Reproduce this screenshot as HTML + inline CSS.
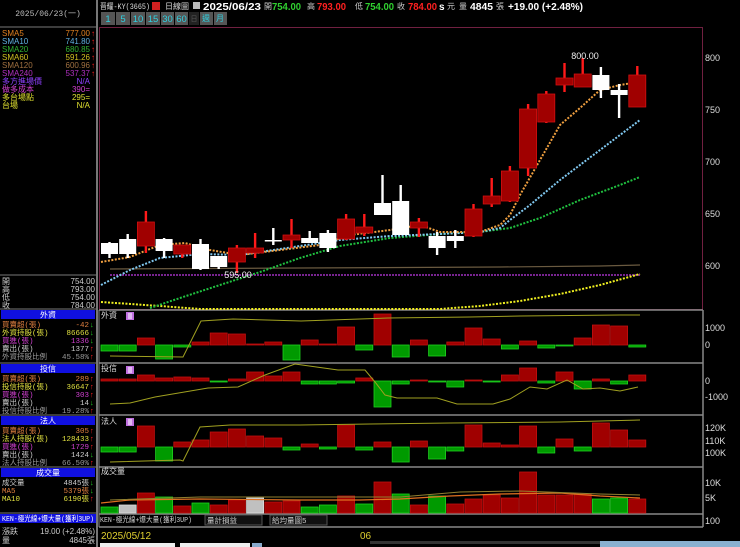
<!DOCTYPE html>
<html><head><meta charset="utf-8">
<style>
html,body{margin:0;padding:0;background:#000;width:740px;height:547px;overflow:hidden;}
svg{display:block}
text{font-family:"Liberation Sans","Noto Sans CJK TC",sans-serif;}
.m{font-family:"Liberation Mono","Noto Sans CJK TC",monospace;}
</style></head><body>
<svg id="s" width="740" height="547" viewBox="0 0 740 547" xmlns="http://www.w3.org/2000/svg">
<rect width="740" height="547" fill="#000"/>
<text x="48" y="16" fill="#bbb" font-size="8" text-anchor="middle" class="m">2025/06/23(一)</text>
<line x1="97" y1="0" x2="97" y2="547" stroke="#777" stroke-width="2"/>
<line x1="0" y1="27" x2="97" y2="27" stroke="#777"/>
<g class="m" font-size="8">
<text x="2" y="36" fill="#e08020">SMA5</text><text x="90" y="36" fill="#e08020" text-anchor="end">777.00</text>
<text x="2" y="44" fill="#60b0e0">SMA10</text><text x="90" y="44" fill="#60b0e0" text-anchor="end">741.80</text>
<text x="2" y="52" fill="#30b030">SMA20</text><text x="90" y="52" fill="#30b030" text-anchor="end">680.85</text>
<text x="2" y="60" fill="#d0c020">SMA60</text><text x="90" y="60" fill="#d0c020" text-anchor="end">591.26</text>
<text x="2" y="68" fill="#a07040">SMA120</text><text x="90" y="68" fill="#a07040" text-anchor="end">600.96</text>
<text x="2" y="76" fill="#b030c0">SMA240</text><text x="90" y="76" fill="#b030c0" text-anchor="end">537.37</text>
<text x="2" y="84" fill="#9040ff">多方進場價</text><text x="90" y="84" fill="#9040ff" text-anchor="end">N/A</text>
<text x="2" y="92" fill="#d040d0">做多成本</text><text x="90" y="92" fill="#d040d0" text-anchor="end">390=</text>
<text x="2" y="100" fill="#e0e030">多台場點</text><text x="90" y="100" fill="#e0e030" text-anchor="end">295=</text>
<text x="2" y="108" fill="#e0e030">台場</text><text x="90" y="108" fill="#e0e030" text-anchor="end">N/A</text>
</g>
<g fill="#ff2020" font-size="8"><text x="91" y="36">↑</text><text x="91" y="44">↑</text><text x="91" y="52">↑</text><text x="91" y="60">↑</text><text x="91" y="68">↑</text><text x="91" y="76">↑</text></g>
<line x1="0" y1="275" x2="97" y2="275" stroke="#777"/>
<g class="m" fill="#ccc" font-size="8">
<text x="2" y="284">開</text><text x="95" y="284" text-anchor="end">754.00</text>
<text x="2" y="292">高</text><text x="95" y="292" text-anchor="end">793.00</text>
<text x="2" y="300">低</text><text x="95" y="300" text-anchor="end">754.00</text>
<text x="2" y="308">收</text><text x="95" y="308" text-anchor="end">784.00</text>
</g>
<g id="leftpanels"></g>
<rect x="0" y="514" width="96" height="9" fill="#1010e0"/>
<text x="2" y="521" class="m" fill="#fff" font-size="7.5" textLength="92" lengthAdjust="spacingAndGlyphs">KEN-極光線+爆大量(獲利3UP)</text>
<g class="m" fill="#ccc" font-size="8"><text x="2" y="534">漲跌</text><text x="95" y="534" text-anchor="end">19.00 (+2.48%)</text>
<text x="2" y="543">量</text><text x="95" y="543" text-anchor="end">4845張</text></g>

<text x="100" y="9" class="m" fill="#ddd" font-size="8" textLength="50" lengthAdjust="spacingAndGlyphs">晋耀-KY(3665)</text>
<rect x="152" y="2" width="8" height="8" fill="#d02020"/>
<text x="165" y="9" class="m" fill="#ddd" font-size="8">日線圖</text>
<rect x="193" y="2" width="7" height="7" fill="#bbb"/>
<g font-size="10" font-weight="bold">
<text x="203" y="10" fill="#fff" textLength="58" lengthAdjust="spacingAndGlyphs">2025/06/23</text>
<text x="264" y="9" class="m" fill="#ccc" font-weight="normal" font-size="8">開</text><text x="272" y="10" fill="#30d030" textLength="29" lengthAdjust="spacingAndGlyphs">754.00</text>
<text x="307" y="9" class="m" fill="#ccc" font-weight="normal" font-size="8">高</text><text x="317" y="10" fill="#ff2020" textLength="29" lengthAdjust="spacingAndGlyphs">793.00</text>
<text x="355" y="9" class="m" fill="#ccc" font-weight="normal" font-size="8">低</text><text x="365" y="10" fill="#30d030" textLength="29" lengthAdjust="spacingAndGlyphs">754.00</text>
<text x="397" y="9" class="m" fill="#ccc" font-weight="normal" font-size="8">收</text><text x="408" y="10" fill="#ff2020" textLength="29" lengthAdjust="spacingAndGlyphs">784.00</text>
<text x="439" y="10" fill="#fff">s</text><text x="447" y="9" class="m" fill="#ccc" font-weight="normal" font-size="8">元</text>
<text x="459" y="9" class="m" fill="#ccc" font-weight="normal" font-size="8">量</text><text x="470" y="10" fill="#fff" textLength="23" lengthAdjust="spacingAndGlyphs">4845</text>
<text x="496" y="9" class="m" fill="#ccc" font-weight="normal" font-size="8">張</text>
<text x="508" y="10" fill="#fff" textLength="75" lengthAdjust="spacingAndGlyphs">+19.00 (+2.48%)</text>
</g>
<g id="chart"></g>
</svg>
<script>
var S=document.getElementById('s'),NS='http://www.w3.org/2000/svg';
function el(t,a,p,txt){var e=document.createElementNS(NS,t);for(var k in a)e.setAttribute(k,a[k]);if(txt!=null)e.textContent=txt;(p||S).appendChild(e);return e;}
var C=document.getElementById('chart');
var bl=[['1',101,14],['5',116,14],['10',131,14],['15',146,14],['30',161,13],['60',175,13]];
bl.forEach(function(b){el('rect',{x:b[1],y:12,width:b[2],height:13,fill:'#555'},C);el('text',{x:b[1]+b[2]/2,y:22,fill:'#30d0e0','font-size':'9.5','text-anchor':'middle'},C,b[0]);});
el('rect',{x:189,y:12,width:10,height:13,fill:'#222'},C);el('text',{x:194,y:21,fill:'#555','font-size':'7','text-anchor':'middle',class:'m'},C,'日');
el('rect',{x:200,y:12,width:13,height:13,fill:'#555'},C);el('text',{x:206,y:21,fill:'#30d0e0','font-size':'8','text-anchor':'middle',class:'m'},C,'週');
el('rect',{x:214,y:12,width:13,height:13,fill:'#555'},C);el('text',{x:220,y:21,fill:'#30d0e0','font-size':'8','text-anchor':'middle',class:'m'},C,'月');
el('rect',{x:99.5,y:27.5,width:603,height:282,fill:'none',stroke:'#702040'},C);
[310,363,415,467,514,527].forEach(function(y){el('line',{x1:99,y1:y,x2:703,y2:y,stroke:'#888','stroke-width':1.5},C);});
el('line',{x1:703,y1:310,x2:703,y2:527,stroke:'#888','stroke-width':1.5},C);
el('line',{x1:99,y1:310,x2:99,y2:527,stroke:'#888','stroke-width':1},C);
var ax=[['800',61],['750',113],['700',165],['650',217],['600',269],['1000',331],['0',348],['0',384],['-1000',400],['120K',431],['110K',444],['100K',456],['10K',486],['5K',501],['100',524]];
ax.forEach(function(a){el('text',{x:705,y:a[1],fill:'#ddd','font-size':'9'},C,a[0]);});
function X(i){return 101+i*18.2;}
var W=17;
var cd=[[243,254,242,258,'w'],[239,254,234,258,'w'],[222,246,211,253,'r'],[239,251,238,258,'w'],[245,254,245,258,'r'],[244,269,239,270,'w'],[256,267,256,269,'w'],[248,262,245,273,'r'],[248,253,233,258,'r'],[240,241,228,245,'w'],[235,240,219,248,'r'],[238,243,231,243,'w'],[233,248,230,252,'w'],[219,239,214,240,'r'],[227,233,214,236,'r'],[203,215,175,215,'w'],[201,235,185,235,'w'],[222,228,218,237,'r'],[236,248,232,255,'w'],[236,241,230,248,'w'],[209,236,204,237,'r'],[196,204,178,207,'r'],[171,201,166,202,'r'],[109,168,104,176,'r'],[94,122,91,123,'r'],[78,85,63,92,'r'],[74,87,58,87,'r'],[75,90,67,98,'w'],[90,95,84,118,'w'],[75,107,66,107,'r']];
function pl(pts,col,dash,w){el('polyline',{points:pts.map(function(p){return p.join(',')}).join(' '),fill:'none',stroke:col,'stroke-width':w||1.6,'stroke-dasharray':dash||''},C);}
pl([[110,269],[300,268],[500,267],[600,266],[640,265]],'#6a5a40','',1.2);
pl([[110,275],[640,275]],'#a030c0','2,1',1.6);
pl([[101,302],[160,306],[200,309],[440,309],[480,306],[520,301],[560,294],[600,285],[640,274]],'#f0f020','2,1.5',2);
pl([[150,308],[180,298],[220,285],[260,272],[300,258],[340,246],[390,238],[440,234],[480,232],[510,228],[540,218],[580,200],[620,185],[640,177]],'#20c040','2,1.5',2);
pl([[101,285],[130,270],[160,258],[200,254],[240,255],[300,246],[340,240],[390,236],[440,234],[480,232],[500,228],[510,220],[530,205],[560,180],[600,150],[640,120]],'#80c8f0','2,1.5',2);
pl([[101,262],[130,257],[160,245],[185,243],[210,250],[240,255],[280,250],[320,245],[350,235],[390,230],[420,225],[440,232],[480,232],[500,225],[510,215],[520,195],[540,160],[560,125],[580,108],[600,90],[620,85],[638,82]],'#f0a040','2,1.5',2);
cd.forEach(function(c,i){var x=X(i),cx=x+W/2;
 var wc=c[4]=='r'?'#ff1a1a':'#fff',bc=c[4]=='r'?'#a00000':'#fff';
 el('rect',{x:cx-1.2,y:c[2],width:2.4,height:c[3]-c[2],fill:wc},C);
 el('rect',{x:x,y:c[0],width:W,height:Math.max(1.5,c[1]-c[0]),fill:bc,stroke:c[4]=='r'?'#d01010':'none','stroke-width':0.8},C);});
el('text',{x:585,y:59,fill:'#eee','font-size':'9','text-anchor':'middle'},C,'800.00');
el('text',{x:238,y:278,fill:'#eee','font-size':'9','text-anchor':'middle'},C,'595.00');
function bars(z,arr){arr.forEach(function(v,i){var x=X(i);if(v==0)return;var r=v>0;
 el('rect',{x:x,y:r?z-v:z,width:W,height:Math.max(1,Math.abs(v)),fill:r?'#a00000':'#009a00',stroke:r?'#c01010':'#20d020','stroke-width':0.8},C);});}
bars(345,[-6,-6,7,-14,-2,3,12,11,1,3,-15,5,1,18,-5,31,-12,5,-11,3,17,6,-4,4,-3,-1,7,20,19,-2]);
bars(381,[2,2,6,3,4,3,-1,2,9,5,9,-3,-3,-2,3,-26,-3,1,-1,-6,1,-1,6,13,-2,9,-8,2,-3,6]);
bars(447,[-5,-5,21,-14,5,7,15,18,11,9,-3,3,-2,22,-3,5,-15,6,-12,-4,22,4,2,21,-6,8,-4,24,17,7]);
var vt=[507,505,493,497,506,503,505,500,498,502,501,507,505,496,504,482,494,505,496,504,499,495,498,472,495,495,494,499,498,499];
var vc='gwrgrgrrwrrggrgrgrgrrrrrrrrggr';
vt.forEach(function(t,i){var c=vc[i];el('rect',{x:X(i),y:t,width:W,height:513-t,fill:c=='r'?'#a00000':c=='g'?'#009a00':'#c0c0c0',stroke:c=='r'?'#c01010':c=='g'?'#20d020':'#ddd','stroke-width':0.8},C);});
pl([[110,356],[183,357],[201,321],[233,319],[301,321],[388,318],[470,317],[520,316],[620,315],[640,315]],'#a0a020','',1);
pl([[110,404],[130,403],[155,397],[208,388],[238,387],[265,375],[295,364],[338,370],[365,370],[375,382],[385,395],[397,398],[437,398],[457,404],[493,404],[510,399],[530,387],[547,389],[567,380],[583,389],[600,388],[620,391],[638,387]],'#a0a020','',1);
pl([[110,462],[180,460],[183,461],[200,427],[230,425],[300,425],[370,424],[450,423],[560,422],[640,420]],'#a0a020','',1);
pl([[101,503],[130,500],[200,499],[300,500],[360,500],[400,499],[450,496],[500,494],[560,493],[600,496],[640,498]],'#e07020','',1.2);
pl([[110,500],[200,497],[300,497],[400,497],[460,492],[520,491],[600,494],[640,495]],'#908030','',1);
[['外資',318,312],['投信',371,366],['法人',424,418],['成交量',474,null]].forEach(function(p){el('text',{x:101,y:p[1],fill:'#ddd','font-size':'8',class:'m'},C,p[0]);
 if(p[2]){el('rect',{x:126,y:p[2],width:8,height:8,fill:'#c070e0'},C);for(var k=0;k<3;k++)el('rect',{x:128,y:p[2]+1.5+k*2,width:4,height:1,fill:'#fff'},C);}});
var L=document.getElementById('leftpanels');
function lp(y,title,rows){el('rect',{x:1,y:y,width:94,height:9,fill:'#1010e0'},L);el('text',{x:48,y:y+7.5,fill:'#fff','font-size':'8','text-anchor':'middle',class:'m'},L,title);
 rows.forEach(function(r,k){var yy=y+17+k*8;el('text',{x:2,y:yy,fill:r[2],class:'m','font-size':'7.5'},L,r[0]);el('text',{x:89,y:yy,fill:r[2],class:'m','font-size':'7.5','text-anchor':'end'},L,r[1]);if(r[3])el('text',{x:90,y:yy,fill:r[3]=='u'?'#ff2020':'#20d020','font-size':'7.5'},L,r[3]=='u'?'↑':'↓');});}
lp(310,'外資',[['買賣超(張)','-42','#e08040','d'],['外資持股(張)','86666','#e0e040','d'],['買進(張)','1336','#d040d0','d'],['賣出(張)','1377','#ccc','u'],['外資持股比例','45.58%','#999','u']]);
lp(364,'投信',[['買賣超(張)','289','#e08040','u'],['投信持股(張)','36647','#e0e040','u'],['買進(張)','303','#d040d0','u'],['賣出(張)','14','#ccc','d'],['投信持股比例','19.28%','#999','u']]);
lp(416,'法人',[['買賣超(張)','305','#e08040','u'],['法人持股(張)','128433','#e0e040','u'],['買進(張)','1729','#d040d0','u'],['賣出(張)','1424','#ccc','d'],['法人持股比例','66.50%','#999','u']]);
lp(468,'成交量',[['成交量','4845張','#ccc','d'],['MA5','5379張','#e08040','d'],['MA10','6190張','#e0e040','u']]);
[309,363,415,467,513].forEach(function(y){el('line',{x1:0,y1:y,x2:97,y2:y,stroke:'#777'},L);});
el('text',{x:100,y:522,fill:'#ccc','font-size':'7.5',class:'m',textLength:'92',lengthAdjust:'spacingAndGlyphs'},C,'KEN-極光線+爆大量(獲利3UP)');
el('rect',{x:205,y:515,width:57,height:10,fill:'#111',stroke:'#555'},C);el('text',{x:207,y:523,fill:'#ccc','font-size':'7.5',class:'m'},C,'量計損益');
el('rect',{x:270,y:515,width:57,height:10,fill:'#111',stroke:'#555'},C);el('text',{x:272,y:523,fill:'#ccc','font-size':'7.5',class:'m'},C,'給均量圖5');
el('text',{x:101,y:539,fill:'#e0d030','font-size':'10'},C,'2025/05/12');
el('text',{x:360,y:539,fill:'#e0d030','font-size':'10'},C,'06');
el('rect',{x:100,y:543,width:75,height:6,fill:'#eee'},C);
el('rect',{x:180,y:543,width:70,height:6,fill:'#eee'},C);
el('rect',{x:252,y:543,width:10,height:6,fill:'#8ac'},C);
el('rect',{x:600,y:541,width:140,height:6,fill:'#8ab0d0'},C);
el('rect',{x:370,y:541,width:230,height:3,fill:'#333'},C);
</script>
</body></html>
